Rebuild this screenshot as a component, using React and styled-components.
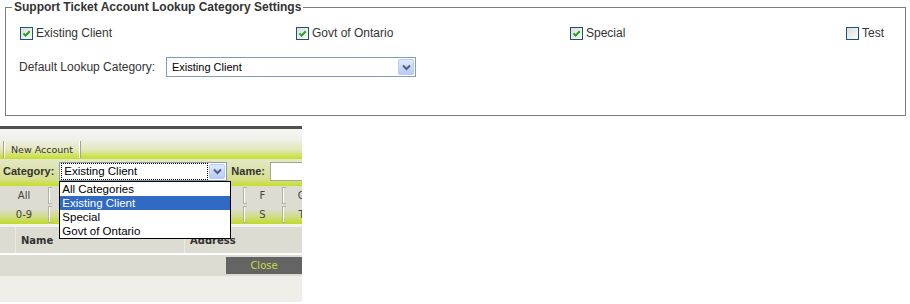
import styled, { createGlobalStyle } from 'styled-components';

const categories = ['All Categories', 'Existing Client', 'Special', 'Govt of Ontario'];
const rowOne = ['All', 'A', 'B', 'C', 'D', 'E', 'F', 'G', 'H', 'I', 'J', 'K', 'L', 'M'];
const rowTwo = ['0-9', 'N', 'O', 'P', 'Q', 'R', 'S', 'T', 'U', 'V', 'W', 'X', 'Y', 'Z'];

const checks = [
	{ label: 'Existing Client', checked: true },
	{ label: 'Govt of Ontario', checked: true },
	{ label: 'Special', checked: true },
	{ label: 'Test', checked: false },
];

function Chevron() {
	return (
		<svg width='9' height='7' viewBox='0 0 9 7'>
			<path d='M1 1.5 L4.5 5 L8 1.5' fill='none' stroke='#4d6185' strokeWidth='2' />
		</svg>
	);
}

function CheckMark() {
	return (
		<svg width='9' height='9' viewBox='0 0 9 9'>
			<path d='M1.4 4.4 L3.6 6.6 L7.7 2.2' fill='none' stroke='#21a121' strokeWidth='2' />
		</svg>
	);
}

export default function App() {
	return (
		<>
			<GlobalStyle />
			<Fieldset>
				<Legend>Support Ticket Account Lookup Category Settings</Legend>
				<Content>
					<CheckRow>
						{checks.map((c) => (
							<CheckItem key={c.label}>
								<Box>{c.checked && <CheckMark />}</Box>
								{c.label}
							</CheckItem>
						))}
					</CheckRow>
					<SelectRow>
						<FieldLabel>Default Lookup Category:</FieldLabel>
						<Select width='250px' height='20px'>
							<SelectText>Existing Client</SelectText>
							<ArrowButton>
								<Chevron />
							</ArrowButton>
						</Select>
					</SelectRow>
				</Content>
			</Fieldset>

			<Panel>
				<Toolbar>
					<ToolButton>New Account</ToolButton>
				</Toolbar>
				<CategoryRow>
					<BoldLabel>Category:</BoldLabel>
					<Select width='168px' height='19px'>
						<FocusText>Existing Client</FocusText>
						<ArrowButton>
							<Chevron />
						</ArrowButton>
						<Dropdown>
							{categories.map((c) => (
								<Option key={c} selected={c === 'Existing Client'}>
									{c}
								</Option>
							))}
						</Dropdown>
					</Select>
					<BoldLabel margin_left='4px'>Name:</BoldLabel>
					<NameInput />
				</CategoryRow>
				<LetterRow>
					{rowOne.map((l, i) => (
						<LetterCell key={l} first={i === 0}>
							{l}
						</LetterCell>
					))}
				</LetterRow>
				<LetterRow bottom>
					{rowTwo.map((l, i) => (
						<LetterCell key={l} first={i === 0}>
							{l}
						</LetterCell>
					))}
				</LetterRow>
				<HeaderRow>
					<HeaderCell width='16px' />
					<HeaderCell width='169px'>Name</HeaderCell>
					<HeaderCell width='120px'>Address</HeaderCell>
				</HeaderRow>
				<ActionBar>
					<CloseButton>Close</CloseButton>
				</ActionBar>
				<PanelFoot />
			</Panel>
		</>
	);
}

const GlobalStyle = createGlobalStyle`
	body {
		margin: 0;
		background: #fff;
		font-family: 'Liberation Sans', Arial, sans-serif;
	}
`;

const Fieldset = styled.fieldset`
	margin: 0 4px 0 5px;
	padding: 0;
	min-width: 0;
	border: 1px solid #7c7c7c;
`;

const Legend = styled.legend`
	margin-left: 6px;
	padding: 0 2px;
	font: bold 12px/14px 'Liberation Sans', Arial, sans-serif;
	color: #333;
`;

const Content = styled.div`
	padding: 11px 0 38px 14px;
`;

const CheckRow = styled.div`
	display: grid;
	grid-template-columns: 276px 274px 276px auto;
	height: 16px;
	align-items: center;
`;

const CheckItem = styled.label`
	display: flex;
	align-items: center;
	gap: 3px;
	font-size: 12px;
	color: #333;
`;

const Box = styled.span`
	box-sizing: border-box;
	width: 13px;
	height: 13px;
	border: 1px solid #1c5180;
	background: linear-gradient(135deg, #dcdcd7, #fbfbf8);
	display: flex;
	align-items: center;
	justify-content: center;
`;

const SelectRow = styled.div`
	display: flex;
	align-items: center;
	margin-top: 16px;
`;

const FieldLabel = styled.span`
	width: 146px;
	font-size: 12px;
	color: #333;
	margin-left: -1px;
	padding-right: 1px;
`;

const Select = styled.div`
	position: relative;
	flex: none;
	box-sizing: border-box;
	width: ${(props) => props.width};
	height: ${(props) => props.height};
	border: 1px solid #7f9db9;
	background: #fff;
	display: flex;
	align-items: center;
	font: 11px 'Liberation Sans', Arial, sans-serif;
	color: #000;
`;

const SelectText = styled.span`
	padding-left: 5px;
	flex: 1;
`;

const FocusText = styled.span`
	flex: 1;
	margin: 0 1px;
	height: 15px;
	line-height: 15px;
	padding-left: 2px;
	border: 1px dotted #000;
	font-size: 11.5px;
`;

const ArrowButton = styled.span`
	box-sizing: border-box;
	width: 16px;
	height: calc(100% - 2px);
	margin-right: 1px;
	border: 1px solid #b9cbf3;
	border-radius: 2px;
	background: linear-gradient(#dfe8fd, #b7ccf8);
	display: flex;
	align-items: center;
	justify-content: center;
`;

const Panel = styled.div`
	width: 302px;
	margin-top: 10px;
	overflow: hidden;
	border-top: 3px solid #4f4f4f;
	font-family: 'DejaVu Sans', Verdana, sans-serif;
`;

const Toolbar = styled.div`
	box-sizing: border-box;
	height: 30px;
	display: flex;
	align-items: flex-end;
	padding: 0 0 1px 3px;
	background: linear-gradient(#f6f6f2 0%, #f0f0ea 35%, #e2e8b8 70%, #c5df2a 100%);
`;

const ToolButton = styled.span`
	height: 17px;
	line-height: 17px;
	padding: 0 7px;
	border-left: 1px solid #a4a494;
	border-right: 1px solid #a4a494;
	box-shadow: inset 1px 0 #fff, inset -1px 0 #fff;
	font-size: 9.5px;
	color: #333;
`;

const CategoryRow = styled.div`
	box-sizing: border-box;
	height: 27px;
	display: flex;
	align-items: flex-start;
	padding: 3px 0 0 3px;
	background: linear-gradient(#e4e7c8 0%, #d6e08c 75%, #c4de26 100%);
`;

const BoldLabel = styled.span`
	flex: none;
	font: bold 11px/19px 'Liberation Sans', Arial, sans-serif;
	color: #333;
	margin-left: ${(props) => props.margin_left || 0};
	margin-right: 5px;
`;

const NameInput = styled.span`
	box-sizing: border-box;
	flex: none;
	width: 60px;
	height: 19px;
	border: 1px solid #a5a595;
	background: #fff;
`;

const Dropdown = styled.div`
	position: absolute;
	top: 18px;
	left: -1px;
	z-index: 5;
	box-sizing: border-box;
	width: 172px;
	border: 1px solid #000;
	background: #fff;
`;

const Option = styled.div`
	height: 14px;
	padding-left: 2px;
	font: 11.5px/14px 'Liberation Sans', Arial, sans-serif;
	color: ${(props) => (props.selected ? '#fff' : '#000')};
	background: ${(props) => (props.selected ? '#316ac5' : '#fff')};
`;

const LetterRow = styled.div`
	display: flex;
	height: 19px;
	background: ${(props) =>
		props.bottom ? 'linear-gradient(#dcdcd2 20%, #d0dc8a 60%, #c2da28 100%)' : '#dcdcd2'};
`;

const LetterCell = styled.span`
	position: relative;
	flex: none;
	box-sizing: border-box;
	width: ${(props) => (props.first ? '48px' : '39px')};
	line-height: 19px;
	text-align: center;
	font-size: 10px;
	color: #444;

	&::before {
		content: '';
		display: ${(props) => (props.first ? 'none' : 'block')};
		position: absolute;
		left: 0;
		top: 1px;
		bottom: 1px;
		width: 3px;
		border: 1px solid #b3b3a3;
		border-right: none;
		box-shadow: inset 1px 0 #fff;
	}
`;

const HeaderRow = styled.div`
	display: flex;
	height: 26px;
	margin-top: 3px;
	background: #dcdcd2;
	box-shadow: 0 -3px 0 #f3f3ee;
`;

const HeaderCell = styled.span`
	flex: none;
	width: ${(props) => props.width};
	border-right: 1px solid #ebebe4;
	padding-left: 5px;
	box-sizing: border-box;
	font-weight: bold;
	font-size: 10px;
	line-height: 28px;
	color: #333;

	&:first-child {
		padding-left: 0;
	}
`;

const ActionBar = styled.div`
	box-sizing: border-box;
	height: 21px;
	margin-top: 2px;
	padding-top: 2px;
	display: flex;
	justify-content: flex-end;
	background: #dcdcd2;
`;

const CloseButton = styled.span`
	width: 76px;
	height: 17px;
	line-height: 17px;
	text-align: center;
	background: #646464;
	color: #c8dc3c;
	font-size: 10px;
`;

const PanelFoot = styled.div`
	height: 26px;
	background: #efeee8;
`;
